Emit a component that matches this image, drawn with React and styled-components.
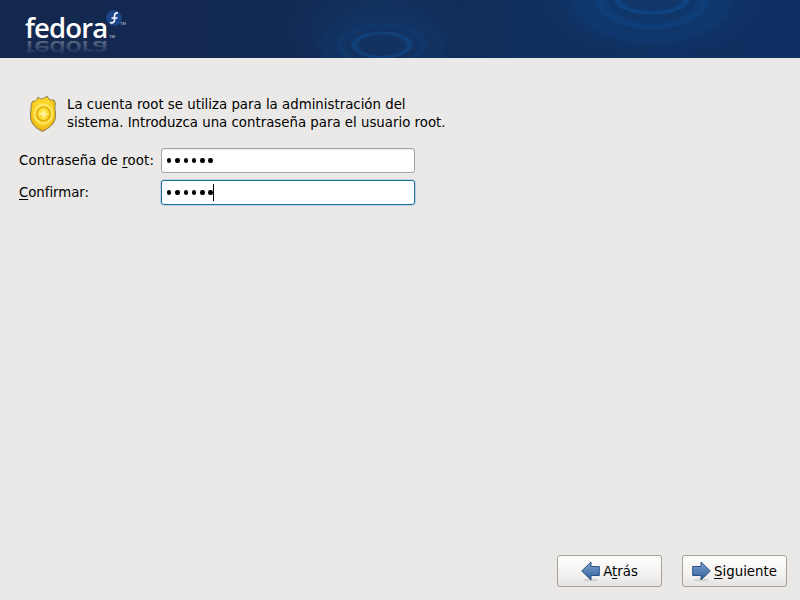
import React from "react";
import styled, { createGlobalStyle } from "styled-components";

const GlobalStyle = createGlobalStyle`
  html, body {
    margin: 0;
    padding: 0;
    background: #eae9e7;
  }
  body {
    font-family: "DejaVu Sans", sans-serif;
    font-size: 13.33px;
    color: #000;
  }
  u {
    text-underline-offset: 2px;
  }
`;

const ring = (x, y, w, h, color) =>
  `radial-gradient(ellipse ${w}px ${h}px at ${x}px ${y}px, transparent 68%, ${color} 88%, transparent 100%)`;

const Page = styled.div`
  width: 800px;
  height: 600px;
  display: flex;
  flex-direction: column;
  overflow: hidden;
`;

const Header = styled.header`
  height: 58px;
  flex: none;
  padding: 16px 0 0 25px;
  box-sizing: border-box;
  overflow: hidden;
  background-image:
    ${ring(652, 0, 39, 15, "#0f4787")},
    ${ring(652, 0, 60, 31, "#0e3f7b")},
    ${ring(652, 0, 82, 45, "#0f3870")},
    ${ring(382, 45, 32, 14, "#114480")},
    ${ring(382, 45, 48, 23, "#10386c")},
    ${ring(382, 45, 66, 32, "#103465")},
    radial-gradient(ellipse 120px 60px at 652px 0, #10366a 40%, transparent 100%),
    radial-gradient(ellipse 90px 50px at 382px 30px, #123362 30%, transparent 100%),
    linear-gradient(90deg, #14284e 0%, #122a55 40%, #0f305f 70%, #0f2f62 100%);
`;

const Logo = styled.div`
  position: relative;
  width: 90px;
  display: flex;
  flex-direction: column;
  align-items: flex-start;
`;

const Wordmark = styled.span`
  font-family: "Open Sans", sans-serif;
  font-size: 27.5px;
  font-weight: 600;
  line-height: 24px;
  letter-spacing: -0.85px;
  color: #fff;
`;

const ReflectionText = styled.text`
  font-family: "Open Sans", sans-serif;
  font-size: 27.5px;
  font-weight: 600;
  letter-spacing: -0.85px;
`;

const LogoBubble = styled.svg`
  position: absolute;
  left: 81px;
  top: -6px;
`;

const TradeMark = styled.span`
  position: absolute;
  left: ${(p) => p.$left}px;
  top: ${(p) => p.$top}px;
  font-family: "Liberation Sans", sans-serif;
  font-size: 4px;
  line-height: 4px;
  color: #cfd6e2;
`;

const Content = styled.main`
  flex: 1;
  display: flex;
  flex-direction: column;
  padding: 37px 0 0 19px;
  min-height: 0;
`;

const Intro = styled.div`
  display: flex;
  align-items: center;
  gap: 10px;
  padding-left: 10px;
  margin-bottom: 15px;
  height: 38px;
`;

const IntroText = styled.p`
  margin: 0;
  width: 385px;
  line-height: 18px;
  white-space: pre-line;
`;

const Form = styled.div`
  display: grid;
  grid-template-columns: 142px 254px;
  row-gap: 7px;
  align-items: center;
`;

const Label = styled.label`
  white-space: nowrap;
  letter-spacing: ${(p) => (p.$wide ? "0.11px" : "-0.05px")};
`;

const Field = styled.div`
  height: 25px;
  box-sizing: border-box;
  display: flex;
  align-items: center;
  padding-left: 5px;
  background: #fff;
  border-radius: 3px;
  border: 1px solid ${(p) => (p.$focused ? "#1b6e9e" : "#a8a3a0")};
  box-shadow: ${(p) =>
    p.$focused ? "0 0 0 1px rgba(120, 170, 205, 0.35)" : "inset 0 1px 1px rgba(0, 0, 0, 0.08)"};
`;

const Dot = styled.span`
  width: 4.4px;
  height: 4.4px;
  border-radius: 50%;
  background: #000;
  margin-right: 3.9px;
`;

const Caret = styled.span`
  width: 1px;
  height: 17px;
  background: #000;
  margin-left: -3.6px;
`;

const Footer = styled.footer`
  flex: none;
  display: flex;
  justify-content: flex-end;
  gap: 20px;
  padding: 0 13px 13px 0;
`;

const Button = styled.button`
  width: 105px;
  height: 32px;
  padding: 0;
  display: flex;
  align-items: center;
  justify-content: center;
  gap: 3px;
  font: inherit;
  color: #000;
  border: 1px solid #a5a09c;
  border-radius: 3px;
  background: linear-gradient(180deg, #fdfdfc 0%, #f3f2f1 60%, #e6e4e2 100%);
`;

const BadgeIcon = () => (
  <svg width="28" height="38" viewBox="0 0 28 38">
    <defs>
      <radialGradient id="gold" cx="0.5" cy="0.42" r="0.68">
        <stop offset="0" stopColor="#ffe53d" />
        <stop offset="0.6" stopColor="#f9cf22" />
        <stop offset="1" stopColor="#c98a0a" />
      </radialGradient>
    </defs>
    <path
      d="M4 6 C6 6.5 8 5.5 9 2 C10.5 3.5 12 4.5 14 3.5 C15.5 3 17 2 18 1 C19 4 21.5 5.5 25 5 L26.5 8.5 C25 12 27 17 26.5 22 C26 29 20 33 13.5 36.5 C7 33.5 2 29 1.5 22 C1 17 3 12 2 9 Z"
      fill="url(#gold)"
      stroke="#85764a"
      strokeWidth="0.9"
    />
    <ellipse cx="14.5" cy="19" rx="9" ry="9.5" fill="none" stroke="#ffec7a" strokeWidth="1.3" />
    <ellipse cx="14.5" cy="19" rx="6.6" ry="7" fill="none" stroke="#d99f10" strokeWidth="1.2" />
    <path d="M14.5 14 L16 17.6 L19.5 19 L16 20.4 L14.5 24 L13 20.4 L9.5 19 L13 17.6 Z" fill="#fff3a0" />
  </svg>
);

const ArrowIcon = ({ flip }) => (
  <svg
    width="19"
    height="21"
    viewBox="0 0 19 21"
    style={flip ? { transform: "scaleX(-1)" } : undefined}
  >
    <defs>
      <linearGradient id="arrowBlue" x1="0" y1="0" x2="0" y2="1">
        <stop offset="0" stopColor="#7fa3cf" />
        <stop offset="1" stopColor="#2f5d9b" />
      </linearGradient>
    </defs>
    <ellipse cx="10" cy="19" rx="8" ry="1.5" fill="#000" opacity="0.1" />
    <path
      d="M0.7 10 L10 1 L10 5.5 L18.3 5.5 L18.3 14.5 L10 14.5 L10 19 Z"
      fill="url(#arrowBlue)"
      stroke="#2b5288"
      strokeWidth="1"
    />
  </svg>
);

// the mirrored wordmark under the logo is part of the drawing
const LogoReflection = () => (
  <svg width="90" height="17" viewBox="0 0 90 17">
    <defs>
      <linearGradient id="fade" x1="0" y1="0" x2="0" y2="1">
        <stop offset="0.25" stopColor="#fff" stopOpacity="0" />
        <stop offset="0.8" stopColor="#fff" stopOpacity="0.32" />
      </linearGradient>
    </defs>
    <ReflectionText aria-hidden="true" transform="translate(0 1) scale(1 -0.7)" fill="url(#fade)">
      fedora
    </ReflectionText>
  </svg>
);

const PasswordField = ({ focused }) => (
  <Field $focused={focused}>
    {[0, 1, 2, 3, 4, 5].map((i) => (
      <Dot key={i} />
    ))}
    {focused && <Caret />}
  </Field>
);

const App = () => (
  <Page>
    <GlobalStyle />
    <Header>
      <Logo>
        <Wordmark>fedora</Wordmark>
        <LogoReflection />
        <LogoBubble width="16" height="16" viewBox="0 0 16 16">
          <circle cx="8" cy="8" r="7.8" fill="#1b4688" />
          <path
            d="M12 3 C9.5 2.5 8.5 4 8.5 6 L8.5 10 C8.5 12.5 6.5 13.5 4 12.5 M5.5 8 L11.5 8"
            fill="none"
            stroke="#fff"
            strokeWidth="1.6"
          />
        </LogoBubble>
        <TradeMark $left={95} $top={6}>TM</TradeMark>
        <TradeMark $left={84} $top={19}>TM</TradeMark>
      </Logo>
    </Header>
    <Content>
      <Intro>
        <BadgeIcon />
        <IntroText>
          {"La cuenta root se utiliza para la administración del\nsistema. Introduzca una contraseña para el usuario root."}
        </IntroText>
      </Intro>
      <Form>
        <Label $wide>Contraseña de <u>r</u>oot:</Label>
        <PasswordField />
        <Label><u>C</u>onfirmar:</Label>
        <PasswordField focused />
      </Form>
    </Content>
    <Footer>
      <Button>
        <ArrowIcon />
        <span>A<u>t</u>rás</span>
      </Button>
      <Button>
        <ArrowIcon flip />
        <span><u>S</u>iguiente</span>
      </Button>
    </Footer>
  </Page>
);

export default App;
